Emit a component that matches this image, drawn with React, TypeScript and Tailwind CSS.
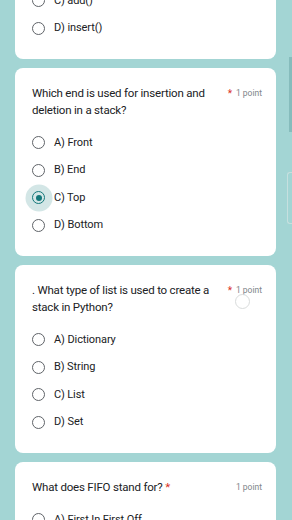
import React from "react";

type Question = {
  text: string;
  options: string[];
  selected?: number;
  inlineStar?: boolean;
  ghost?: boolean;
};

const questions: Question[] = [
  {
    text: "Which method is used to add an element to a stack?",
    options: ["A) push()", "B) append()", "C) add()", "D) insert()"],
  },
  {
    text: "Which end is used for insertion and deletion in a stack?",
    options: ["A) Front", "B) End", "C) Top", "D) Bottom"],
    selected: 2,
  },
  {
    text: ". What type of list is used to create a stack in Python?",
    options: ["A) Dictionary", "B) String", "C) List", "D) Set"],
    ghost: true,
  },
  {
    text: "What does FIFO stand for?",
    options: ["A) First In First Off", "B) First In First Out"],
    inlineStar: true,
  },
];

function Radio({ checked }: { checked?: boolean }) {
  if (checked) {
    return (
      <span className="relative flex h-[13px] w-[13px] items-center justify-center">
        <span className="absolute left-1/2 top-1/2 h-[27px] w-[27px] -translate-x-1/2 -translate-y-1/2 rounded-full bg-[#d3e6e6]" />
        <span className="relative flex h-[13px] w-[13px] items-center justify-center rounded-full border-[1.5px] border-[#13787a]">
          <span className="h-[6px] w-[6px] rounded-full bg-[#13787a]" />
        </span>
      </span>
    );
  }
  return (
    <span className="block h-[13px] w-[13px] rounded-full border-[1.5px] border-[#5f6368]" />
  );
}

function QuestionCard({ q, className }: { q: Question; className?: string }) {
  return (
    <div
      className={`relative rounded-[8px] bg-white pb-[17px] pl-[17px] pr-[14px] pt-[17px] ${className ?? ""}`}
    >
      <div className="flex items-start">
        <p className="w-[190px] text-[11.5px] leading-[17px] tracking-[-0.2px] text-[#202124]">
          {q.text}
          {q.inlineStar && <span className="text-[#d93025]"> *</span>}
        </p>
        <div className="ml-auto flex items-center gap-[4px] pt-[2px] text-[8.5px] leading-[13px] text-[#80868b]">
          {!q.inlineStar && <span className="text-[10px] text-[#d93025]">*</span>}
          <span>1 point</span>
        </div>
      </div>
      {q.ghost && (
        <span className="absolute right-[26px] top-[29px] h-[15px] w-[15px] rounded-full border-[1.5px] border-[#d9dcdc]" />
      )}
      <div className="mt-[10px] flex flex-col">
        {q.options.map((opt, i) => (
          <div key={i} className="flex h-[27.5px] items-center gap-[9px]">
            <Radio checked={q.selected === i} />
            <span className="text-[11px] tracking-[-0.1px] text-[#202124]">{opt}</span>
          </div>
        ))}
      </div>
    </div>
  );
}

export default function App() {
  return (
    <div
      className="relative h-[520px] w-[292px] overflow-hidden bg-[#a3d5d4]"
      style={{ fontFamily: "Roboto, 'Noto Sans', sans-serif" }}
    >
      <div className="flex flex-col gap-[9px] pl-[15px] pr-[16px]">
        <QuestionCard q={questions[0]} className="mt-[-129px]" />
        <QuestionCard q={questions[1]} />
        <QuestionCard q={questions[2]} />
        <QuestionCard q={questions[3]} />
      </div>
      {/* scrollbar */}
      <div className="absolute right-0 top-[57px] h-[75px] w-[3px] bg-[#86bcbc]" />
      <div className="absolute right-0 top-[172px] h-[52px] w-[5px] rounded-l-[3px] border border-r-0 border-[#c6e0df]" />
    </div>
  );
}
